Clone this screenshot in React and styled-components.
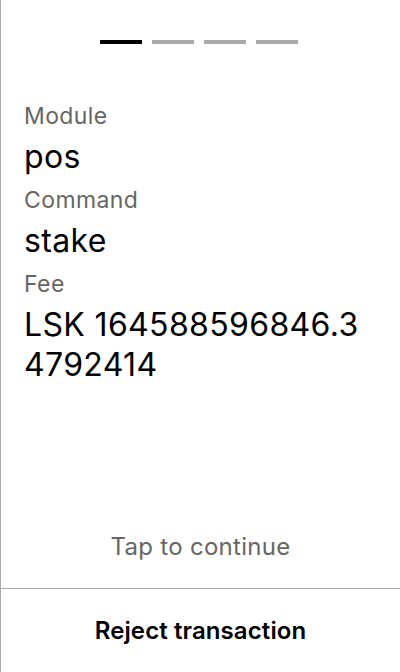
import React from "react";
import styled, { createGlobalStyle } from "styled-components";

const GlobalStyle = createGlobalStyle`
  html, body {
    margin: 0;
    padding: 0;
    background: #fff;
  }
  body {
    font-family: Inter, "Noto Sans", sans-serif;
    color: #000;
  }
`;

const steps = [true, false, false, false];

const details = [
  { label: "Module", value: "pos" },
  { label: "Command", value: "stake" },
  { label: "Fee", value: "LSK 164588596846.34792414" }
];

const App = () => {
  return (
    <>
      <GlobalStyle />
      <Screen>
        <Progress>
          {steps.map((active, i) => (
            <Step key={i} active={active} />
          ))}
        </Progress>
        <Details>
          {details.map(item => (
            <React.Fragment key={item.label}>
              <Label>{item.label}</Label>
              <Value>{item.value}</Value>
            </React.Fragment>
          ))}
        </Details>
        <TapHint>Tap to continue</TapHint>
        <Footer>
          <RejectButton>Reject transaction</RejectButton>
        </Footer>
      </Screen>
    </>
  );
};
export default App;

/*************Styles************/
const Screen = styled.div`
  height: 672px;
  box-sizing: border-box;
  border-left: 1px solid #aaa;
  display: flex;
  flex-direction: column;
`;

const Progress = styled.div`
  display: flex;
  justify-content: center;
  gap: 10px;
  padding-top: 40px;
  padding-right: 3px;
`;

const Step = styled.div`
  width: 42px;
  height: 4px;
  background: ${props => (props.active ? "#000" : "#aaa")};
`;

const Details = styled.div`
  display: flex;
  flex-direction: column;
  padding: 58px 24px 0 23px;
  flex: 1;
`;

const Label = styled.div`
  font-size: 23px;
  line-height: 28px;
  letter-spacing: 0.4px;
  color: #666;
`;

const Value = styled.div`
  font-size: 32px;
  line-height: 40px;
  letter-spacing: 0.35px;
  padding: 7px 0 9px;
  word-break: break-all;
`;

const TapHint = styled.div`
  text-align: center;
  font-size: 24px;
  line-height: 28px;
  letter-spacing: 0.3px;
  color: #666;
  padding-bottom: 27px;
`;

const Footer = styled.div`
  border-top: 1px solid #aaa;
  height: 83px;
  display: flex;
  align-items: center;
  justify-content: center;
`;

const RejectButton = styled.button`
  border: none;
  background: none;
  padding: 0;
  font-family: Inter, "Noto Sans", sans-serif;
  font-size: 24px;
  font-weight: 600;
  letter-spacing: 0.1px;
  color: #000;
  cursor: pointer;
`;
